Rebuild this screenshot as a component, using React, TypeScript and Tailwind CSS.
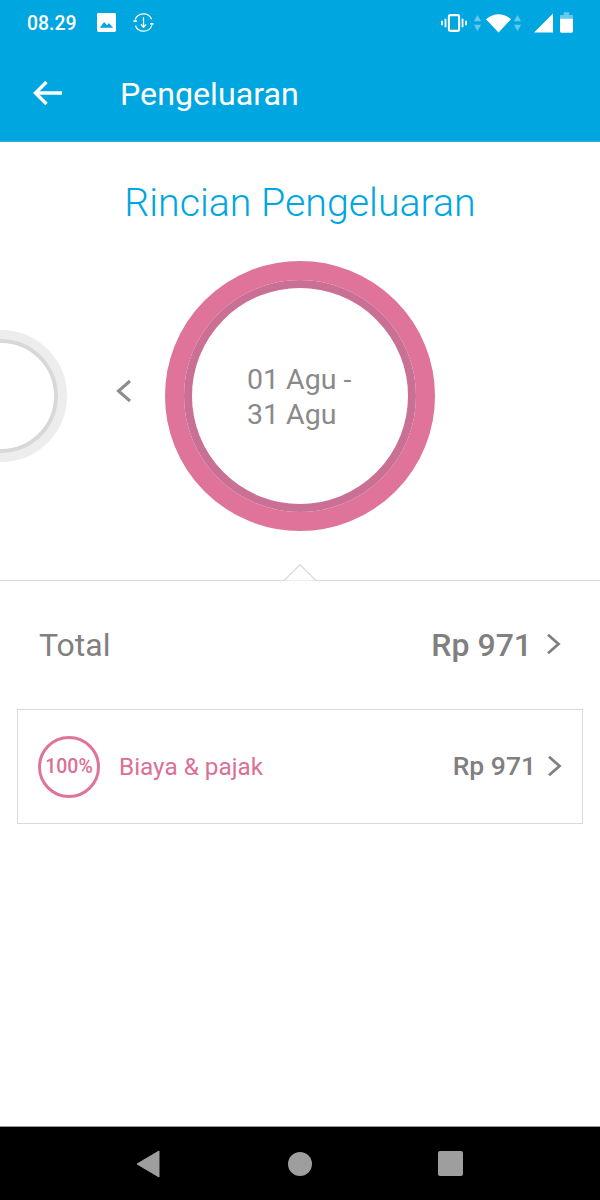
import React from "react";

const Chevron = ({ className }: { className: string }) => (
  <svg viewBox="0 0 16 24" className={className} fill="none" stroke="currentColor" strokeWidth="3">
    <path d="M2 2 L13.5 12 L2 22" />
  </svg>
);

export default function App() {
  return (
    <div className="w-[600px] h-[1200px] bg-white flex flex-col overflow-hidden font-['Roboto',sans-serif]">
      <header className="h-[142px] bg-[#00a6df] border-b border-[#3fa9cf] shrink-0 flex flex-col text-white">
        <div className="h-[48px] flex items-center pl-[27px] pr-[27px]">
          <span className="text-[19.4px] font-medium w-[70px] leading-none">08.29</span>
          <svg viewBox="0 0 20 20" className="w-[19px] h-[19px] mr-[17px] mb-[3px]">
            <rect width="20" height="20" rx="1.5" fill="#fff" />
            <path d="M3 15.5 L7.5 9.5 L10.5 13 L12.5 10.5 L17 15.5 Z" fill="#00a6df" />
          </svg>
          <svg viewBox="0 0 22 22" className="w-[21px] h-[21px] mb-[3px]" fill="none" stroke="#fff" strokeWidth="1.3">
            <path d="M2.2 8 A9.3 9.3 0 0 1 19.5 7.5 M19.8 14 A9.3 9.3 0 0 1 2.5 14.5" />
            <path d="M11 5.5 V15.5 M8.3 13 L11 16 L13.7 13" />
            <path d="M0.5 9.5 H4 M18 12.5 H21.5" strokeWidth="1.8" />
          </svg>
          <div className="flex-1" />
          <svg viewBox="0 0 28 20" className="w-[26px] h-[20px] mb-[3px]" fill="none" stroke="#fff">
            <rect x="8.5" y="1.5" width="11" height="17" rx="1.5" strokeWidth="2.2" />
            <path d="M4.8 5.5 V14.5 M23.2 5.5 V14.5" strokeWidth="2" />
            <path d="M1 7.5 V12.5 M27 7.5 V12.5" strokeWidth="2" />
          </svg>
          <svg viewBox="0 0 10 20" className="w-[9px] h-[20px] ml-[6px] mb-[3px]" fill="#66c8ec">
            <path d="M5 1 L9 8 H1 Z M5 19 L9 12 H1 Z" />
          </svg>
          <svg viewBox="0 0 26 20" className="w-[25px] h-[20px] ml-[4px] mb-[3px]" fill="#fff">
            <path d="M0 6 Q13 -4 26 6 L13 20 Z" />
          </svg>
          <svg viewBox="0 0 10 20" className="w-[9px] h-[20px] ml-[2px] mb-[3px]" fill="#66c8ec">
            <path d="M5 1 L9 8 H1 Z M5 19 L9 12 H1 Z" />
          </svg>
          <svg viewBox="0 0 20 20" className="w-[19px] h-[20px] ml-[12px] mb-[3px]" fill="#fff">
            <path d="M0 20 L20 0 V20 Z" />
          </svg>
          <svg viewBox="0 0 14 22" className="w-[13px] h-[21px] ml-[7px] mb-[3px]">
            <path d="M4 0 H10 V3 H14 V8 H0 V3 H4 Z" fill="#66c8ec" />
            <path d="M0 7 H14 V20.5 Q14 22 12.5 22 H1.5 Q0 22 0 20.5 Z" fill="#fff" />
          </svg>
        </div>
        <div className="flex-1 flex items-center">
          <svg viewBox="0 0 30 26" className="w-[30px] h-[26px] ml-[33px] mb-[3px]" fill="none" stroke="#fff" strokeWidth="3.4">
            <path d="M29 13 H3 M13.5 2 L2.5 13 L13.5 24" />
          </svg>
          <span className="ml-[58px] text-[32.2px] leading-none -translate-x-[1px]">Pengeluaran</span>
        </div>
      </header>

      <main className="flex-1 flex flex-col">
        <h1 className="mt-[39px] h-[44px] leading-[44px] text-center text-[39.3px] font-light text-[#00a6df]">
          Rincian Pengeluaran
        </h1>
        <div className="mt-[36px] h-[270px] flex items-center">
          <div className="w-[132px] h-[132px] -ml-[65px] shrink-0 rounded-full border-[9px] border-[#ededed] flex">
            <div className="flex-1 rounded-full border-[4px] border-[#d8d8d8]" />
          </div>
          <Chevron className="w-[16px] h-[24px] ml-[49px] mb-[10px] scale-x-[-1] text-[#8c8c8c]" />
          <div className="w-[270px] h-[270px] ml-[33px] shrink-0 rounded-full border-[19px] border-[#e0739a] flex">
            <div className="flex-1 rounded-full border-[8px] border-[#ca7094] flex items-center pl-[55px]">
              <span className="text-[28.5px] leading-[35px] text-[#8a8a8a] mt-[1px]">
                01 Agu -<br />31 Agu
              </span>
            </div>
          </div>
        </div>

        <div className="relative mt-[49px] h-[1px] bg-[#d9d9d9]">
          <svg viewBox="0 0 32 17" className="absolute left-[284px] top-[-16px] w-[32px] h-[17px]">
            <path d="M0 16.5 L16 0.7 L32 16.5 Z" fill="#fff" />
            <path d="M0 16.5 L16 0.7 L32 16.5" fill="none" stroke="#d9d9d9" strokeWidth="1.2" />
          </svg>
        </div>

        <div className="mt-[44px] h-[40px] flex items-center pl-[39px] pr-[39px] text-[#808080]">
          <span className="text-[32px] leading-none">Total</span>
          <span className="ml-auto text-[32px] font-medium leading-none">Rp 971</span>
          <Chevron className="w-[15px] h-[22px] ml-[14px] mb-[3px]" />
        </div>

        <div className="mt-[44px] mx-[17px] h-[115px] border border-[#d9d9d9] flex items-center pl-[20px] pr-[20px]">
          <div className="w-[62px] h-[62px] rounded-full border-[3.5px] border-[#e0739a] flex items-center justify-center shrink-0">
            <span className="text-[19.5px] font-medium text-[#dc6f96] leading-none">100%</span>
          </div>
          <span className="ml-[19px] text-[24.3px] text-[#dc6f96] leading-none mt-[2px]">Biaya &amp; pajak</span>
          <span className="ml-auto text-[26.5px] font-medium text-[#808080] leading-none">Rp 971</span>
          <Chevron className="w-[15px] h-[22px] ml-[11px] mb-[2px] text-[#808080]" />
        </div>
      </main>

      <nav className="h-[74px] shrink-0 bg-black border-t border-[#9a9a9a] flex items-center">
        <svg viewBox="0 0 24 28" className="w-[24px] h-[28px] ml-[136px]" fill="#9e9e9e">
          <path d="M1 14 L23 1 V27 Z" stroke="#9e9e9e" strokeWidth="1" strokeLinejoin="round" />
        </svg>
        <div className="w-[24px] h-[24px] rounded-full bg-[#9e9e9e] ml-[128px]" />
        <div className="w-[25px] h-[25px] rounded-[2px] bg-[#9e9e9e] ml-[126px]" />
      </nav>
    </div>
  );
}
